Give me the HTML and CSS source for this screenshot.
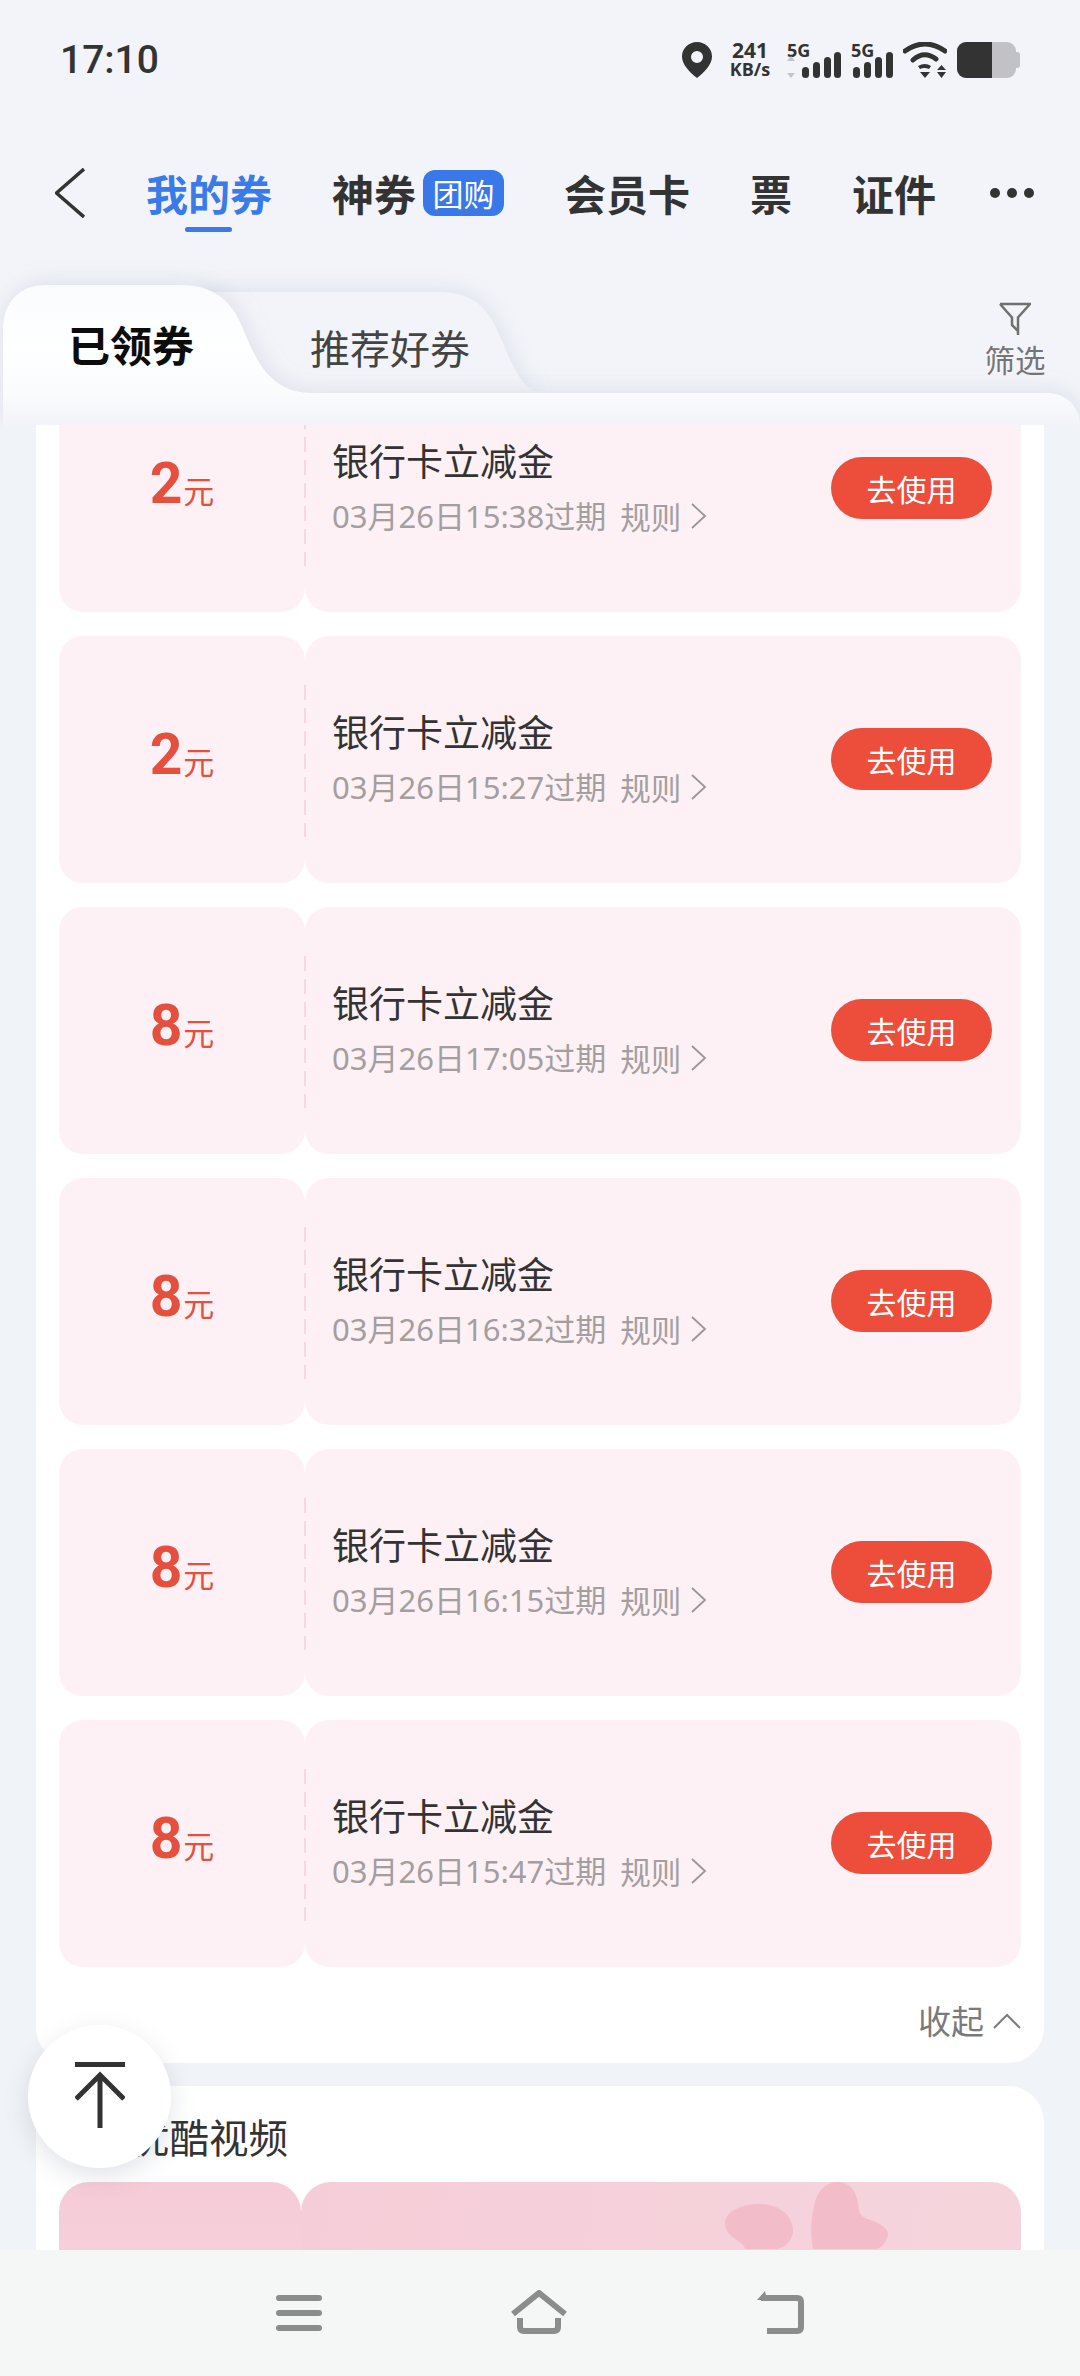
FILE: index.html
```html
<!DOCTYPE html>
<html lang="zh-CN">
<head>
<meta charset="utf-8">
<title>我的券</title>
<link rel="stylesheet" href="styles.css">
</head>
<body>
<div class="page">
  <header class="status">
    <span class="clock">17:10</span>
    <div class="status-icons">
      <svg class="pin" viewBox="0 0 30 36"><path fill-rule="evenodd" d="M15 0C6.700 0 0 6.500 0 14.500 0 23 8.500 31 15 36c6.500-5 15-13 15-21.500C30 6.500 23.300 0 15 0Zm0 9a6 6 0 1 1 0 12 6 6 0 0 1 0-12Z"/></svg>
      <div class="speed"><span>241</span><span class="speed-unit">KB/s</span></div>
      <div class="sim">
        <span class="sim-label">5G</span>
        <svg class="signal" viewBox="0 0 54 26"><path class="sig-arrows" d="M4 4l4 5H0ZM4 26l4-5H0Z"/><rect x="15" y="15" width="7" height="11" rx="3.500"/><rect x="26" y="10" width="7" height="16" rx="3.500"/><rect x="37" y="5" width="7" height="21" rx="3.500"/><rect x="47" y="0" width="7" height="26" rx="3.500"/></svg>
      </div>
      <div class="sim sim-b">
        <span class="sim-label">5G</span>
        <svg class="signal-b" viewBox="0 0 40 26"><rect x="0" y="15" width="7" height="11" rx="3.500"/><rect x="11" y="10" width="7" height="16" rx="3.500"/><rect x="22" y="5" width="7" height="21" rx="3.500"/><rect x="33" y="0" width="7" height="26" rx="3.500"/></svg>
      </div>
      <svg class="wifi" viewBox="0 0 44 36"><path class="wifi-arc" d="M2 9Q22-5 42 9M10 18Q21 8 33 17"/><path d="M15 24q7-4 13 0l-2 3q-5-2-9 0ZM17 30h10l-5 6ZM38.500 23l4.500 5H34ZM34 30h9l-4.500 6Z"/></svg>
      <div class="battery"><div class="battery-body"><div class="battery-level"></div></div><div class="battery-nub"></div></div>
    </div>
  </header>

  <nav class="nav">
    <svg class="back" viewBox="0 0 30 50"><path d="M29 1 1.500 25 29 49"/></svg>
    <div class="nav-item nav-active">我的券</div>
    <div class="nav-item nav-group">神券<span class="badge">团购</span></div>
    <div class="nav-item">会员卡</div>
    <div class="nav-item">票</div>
    <div class="nav-item">证件</div>
    <div class="dots"><i></i><i></i><i></i></div>
  </nav>

  <section class="tabs">
    <svg class="tab-art" viewBox="0 0 1080 155">
      <defs>
        <linearGradient id="sheetFill" gradientUnits="userSpaceOnUse" x1="0" y1="15" x2="0" y2="155"><stop offset="0" stop-color="#fafbfd"/><stop offset=".45" stop-color="#feffff"/><stop offset=".77" stop-color="#fafbfd"/><stop offset="1" stop-color="#f2f4f9"/></linearGradient>
      </defs>
      <path class="tab-second" d="M200 22H440C472 22 488 38 498 62 514 98 522 123 545 123H200Z"/>
      <path class="tab-first" fill="url(#sheetFill)" d="M3 155V60C3 32 20 15 46 15H182C212 15 230 30 240 52 252 78 264 123 312 123H1048C1066 123 1080 137 1080 155Z"/>
    </svg>
    <div class="tab tab-on">已领券</div>
    <div class="tab tab-off">推荐好券</div>
    <div class="filter">
      <svg class="filter-icon" viewBox="0 0 32 34"><path d="M1 2h30L19 15.500V33M1 2 13 15.500V23L19 29"/></svg>
      <span>筛选</span>
    </div>
  </section>

  <main class="scroller">
    <div class="panel panel-list">
      <article class="coupon"><div class="stub"><b>2</b><span>元</span></div><div class="body"><div class="info"><h3>银行卡立减金</h3><p>03月26日15:38过期<span class="rule">规则</span><svg class="chev" viewBox="0 0 16 26"><path d="M1 1l13 12L1 25"/></svg></p></div><button class="use">去使用</button></div></article>
      <article class="coupon"><div class="stub"><b>2</b><span>元</span></div><div class="body"><div class="info"><h3>银行卡立减金</h3><p>03月26日15:27过期<span class="rule">规则</span><svg class="chev" viewBox="0 0 16 26"><path d="M1 1l13 12L1 25"/></svg></p></div><button class="use">去使用</button></div></article>
      <article class="coupon"><div class="stub"><b>8</b><span>元</span></div><div class="body"><div class="info"><h3>银行卡立减金</h3><p>03月26日17:05过期<span class="rule">规则</span><svg class="chev" viewBox="0 0 16 26"><path d="M1 1l13 12L1 25"/></svg></p></div><button class="use">去使用</button></div></article>
      <article class="coupon"><div class="stub"><b>8</b><span>元</span></div><div class="body"><div class="info"><h3>银行卡立减金</h3><p>03月26日16:32过期<span class="rule">规则</span><svg class="chev" viewBox="0 0 16 26"><path d="M1 1l13 12L1 25"/></svg></p></div><button class="use">去使用</button></div></article>
      <article class="coupon"><div class="stub"><b>8</b><span>元</span></div><div class="body"><div class="info"><h3>银行卡立减金</h3><p>03月26日16:15过期<span class="rule">规则</span><svg class="chev" viewBox="0 0 16 26"><path d="M1 1l13 12L1 25"/></svg></p></div><button class="use">去使用</button></div></article>
      <article class="coupon"><div class="stub"><b>8</b><span>元</span></div><div class="body"><div class="info"><h3>银行卡立减金</h3><p>03月26日15:47过期<span class="rule">规则</span><svg class="chev" viewBox="0 0 16 26"><path d="M1 1l13 12L1 25"/></svg></p></div><button class="use">去使用</button></div></article>
      <div class="collapse">收起<svg class="chev-up" viewBox="0 0 28 16"><path d="M1 15 14 2l13 13"/></svg></div>
    </div>
    <div class="panel panel-next">
      <h2>优酷视频</h2>
      <div class="promo">
        <div class="promo-stub"></div>
        <div class="promo-body">
          <svg class="blobs" viewBox="0 0 170 67"><path d="M0 42C0 30 15 22 35 22 55 22 68 35 68 48 68 60 58 67 50 67H20C20 60 0 55 0 42ZM88 67C85 50 86 35 90 20 93 8 102 0 112 0 125 0 132 10 133 22 134 30 135 35 145 38 158 42 163 48 163 52 162 60 156 67 150 67Z"/></svg>
        </div>
      </div>
    </div>
  </main>

  <button class="to-top" aria-label="回到顶部">
    <svg viewBox="0 0 50 66"><path d="M0 2.500h50M25 12v54M1 37 25 13l24 24"/></svg>
  </button>

  <footer class="sysbar">
    <svg class="sys-menu" viewBox="0 0 46 36"><path d="M3 3h40M3 18h40M3 33h40"/></svg>
    <svg class="sys-home" viewBox="0 0 58 44"><path d="M3 24 29 3l26 21M10 28v9q0 4 4 4h30q4 0 4-4v-9"/></svg>
    <svg class="sys-back" viewBox="0 0 50 44"><path d="M6 8h36q4 0 4 4v25q0 4-4 4H12"/><path class="sys-back-tip" d="M2 10 10 1l2 9Z"/></svg>
  </footer>
</div>
</body>
</html>
```
FILE: styles.css
```css
* { box-sizing: border-box; margin: 0; padding: 0; }
html, body { width: 1080px; height: 2376px; overflow: hidden; }
body { background: #f2f4f9; font-family: "Noto Sans CJK SC", "Noto Sans", sans-serif; color: #333; }
.page { position: relative; width: 1080px; height: 2376px; display: flex; flex-direction: column; overflow: hidden; }

/* status bar */
.status { height: 120px; flex: none; display: flex; align-items: flex-start; justify-content: space-between; padding: 36px 60px 0 60px; }
.clock { font-family: Roboto, sans-serif; font-weight: 500; font-size: 39px; line-height: 48px; color: #333; }
.status-icons { display: flex; align-items: flex-start; margin-top: 6px; height: 36px; }
.pin { width: 30px; height: 36px; fill: #333; margin-right: 16px; }
.speed { width: 44px; display: flex; flex-direction: column; align-items: center; font-family: "Open Sans", sans-serif; font-weight: 700; font-size: 21px; line-height: 20px; color: #333; margin-right: 15px; margin-top: -2px; }
.speed-unit { font-size: 18px; line-height: 18px; }
.sim { position: relative; width: 54px; height: 36px; margin-right: 10px; }
.sim-b { width: 42px; }
.sim-label { position: absolute; left: 0; top: -3px; font-family: "Open Sans", sans-serif; font-weight: 700; font-size: 18px; line-height: 22px; color: #333; }
.signal { position: absolute; left: 0; bottom: 0; width: 54px; height: 26px; fill: #333; }
.sig-arrows { fill: #c4c5c9; }
.signal-b { position: absolute; left: 2px; bottom: 0; width: 40px; height: 26px; fill: #333; }
.wifi { width: 44px; height: 36px; fill: #333; margin-right: 10px; }
.wifi-arc { fill: none; stroke: #333; stroke-width: 5; stroke-linecap: round; }
.battery { display: flex; align-items: center; height: 36px; }
.battery-body { width: 59px; height: 36px; border-radius: 9px; background: #c1c1c6; overflow: hidden; }
.battery-level { width: 35px; height: 36px; background: #333; }
.battery-nub { width: 4px; height: 16px; border-radius: 0 3px 3px 0; background: #c1c1c6; }

/* nav */
.nav { height: 150px; flex: none; display: flex; align-items: center; gap: 60px; padding: 0 0 4px 55px; }
.back { width: 30px; height: 50px; fill: none; stroke: #333; stroke-width: 3.500; margin-right: 1px; }
.nav-item { position: relative; font-size: 42px; font-weight: 700; line-height: 60px; color: #333; white-space: nowrap; }
.nav-active { color: #3a7bea; }
.nav-active::after { content: ""; position: absolute; left: 39px; bottom: -9px; width: 47px; height: 5px; border-radius: 3px; background: #3a7bea; }
.nav-group { display: flex; align-items: center; gap: 7px; }
.badge { width: 81px; height: 46px; border-radius: 12px; background: #3a78ea; color: #fff; font-size: 31px; font-weight: 400; line-height: 46px; text-align: center; }
.dots { display: flex; gap: 7px; margin-left: -6px; }
.dots i { width: 10px; height: 10px; border-radius: 50%; background: #333; }

/* tabs */
.tabs { position: relative; height: 155px; flex: none; display: flex; align-items: flex-start; }
.tab-art { position: absolute; left: 0; top: 0; width: 1080px; height: 155px; overflow: visible; }
.tab-second { fill: #f3f4f9; filter: drop-shadow(2px -2px 10px rgba(120,130,165,.16)); }
.tab-first { filter: drop-shadow(2px -1px 11px rgba(120,130,165,.18)); }
.tab { position: relative; white-space: nowrap; }
.tab-on { margin: 44px 0 0 68px; font-size: 42px; font-weight: 700; line-height: 60px; color: #0c0c0c; }
.tab-off { margin: 47px 0 0 116px; font-size: 40px; line-height: 60px; color: #444; }
.filter { position: relative; margin: 32px 34px 0 auto; width: 62px; display: flex; flex-direction: column; align-items: center; font-size: 30.500px; line-height: 40px; color: #757575; }
.filter-icon { width: 32px; height: 34px; fill: none; stroke: #707070; stroke-width: 2.500; margin-bottom: 3px; }

/* scroll area */
.scroller { position: relative; flex: 1; min-height: 0; overflow: hidden; background: #f0f3f7; display: flex; flex-direction: column; gap: 23px; padding: 0 36px; }
.panel { background: #fff; flex: none; }
.panel-list { margin-top: -60px; padding: 0 23px; border-radius: 0 0 36px 36px; display: flex; flex-direction: column; gap: 24px; }
.coupon { display: flex; height: 247px; }
.stub { position: relative; width: 246px; background: #fdf1f5; border-radius: 24px; display: flex; align-items: baseline; justify-content: center; padding-top: 84px; color: #e44f3e; }
.stub::after { content: ""; position: absolute; right: -1px; top: 49px; bottom: 46px; width: 2px; background: repeating-linear-gradient(#f7d8e0 0 15px, transparent 15px 23px); }
.stub b { font-family: Roboto, sans-serif; font-size: 57px; font-weight: 700; line-height: 70px; }
.stub span { font-size: 31px; line-height: 40px; margin-left: 1px; }
.body { flex: 1; background: #fdf1f5; border-radius: 24px; display: flex; align-items: center; justify-content: space-between; padding: 0 29px 0 27px; }
.info { padding-bottom: 4px; }
.info h3 { font-size: 37px; font-weight: 400; line-height: 48px; color: #333; }
.info p { margin-top: 10px; font-family: "Noto Sans", "Noto Sans CJK SC", sans-serif; font-size: 31px; line-height: 44px; color: #a39ea0; display: flex; align-items: center; white-space: nowrap; }
.rule { margin-left: 14px; font-family: "Noto Sans CJK SC", sans-serif; font-size: 30.500px; }
.chev { width: 16px; height: 26px; margin-left: 10px; fill: none; stroke: #9a9698; stroke-width: 1.800; }
.use { width: 161px; height: 62px; margin-top: -2px; border: 0; border-radius: 31px; background: #ec4e3b; color: #fff; font-family: "Noto Sans CJK SC", sans-serif; font-size: 30px; line-height: 62px; }
.collapse { height: 96px; margin-top: -24px; padding-top: 29px; display: flex; align-items: flex-start; justify-content: flex-end; font-size: 33px; line-height: 48px; color: #7a7a7a; }
.chev-up { width: 28px; height: 16px; margin: 17px 0 0 9px; fill: none; stroke: #7a7a7a; stroke-width: 2; }
.panel-next { border-radius: 36px 36px 0 0; padding: 23px 23px 0; }
.panel-next h2 { font-size: 39.500px; font-weight: 400; line-height: 54px; color: #333; padding-left: 71px; }
.promo { display: flex; height: 120px; margin-top: 19px; }
.promo-stub { width: 242px; background: linear-gradient(#f5cbd7, #f5d2dc); border-radius: 30px 30px 0 0; }
.promo-body { position: relative; flex: 1; background: linear-gradient(100deg, #f5cdd8, #f5d5dd); border-radius: 30px 30px 0 0; overflow: hidden; }
.blobs { position: absolute; left: 424px; top: 0; width: 170px; height: 67px; fill: #f3bcc9; }

/* floating */
.to-top { position: absolute; left: 28px; top: 2025px; width: 143px; height: 143px; border: 0; border-radius: 50%; background: #fff; box-shadow: 0 8px 24px rgba(90,100,130,.18); display: flex; align-items: center; justify-content: center; }
.to-top svg { width: 50px; height: 66px; fill: none; stroke: #333; stroke-width: 5; margin-top: -4px; }

/* system bar */
.sysbar { position: relative; height: 126px; flex: none; background: #f5f6f6; display: flex; align-items: flex-start; padding: 40px 0 0 276px; }
.sysbar svg { flex: none; fill: none; stroke: #8c8c8c; stroke-width: 6; }
.sys-menu { width: 46px; height: 36px; margin-top: 5px; stroke-linecap: round; }
.sys-home { width: 58px; height: 44px; margin-left: 188px; }
.sys-back { width: 50px; height: 44px; margin-left: 187px; }
.sys-back-tip { fill: #8c8c8c; stroke: none; }
```
